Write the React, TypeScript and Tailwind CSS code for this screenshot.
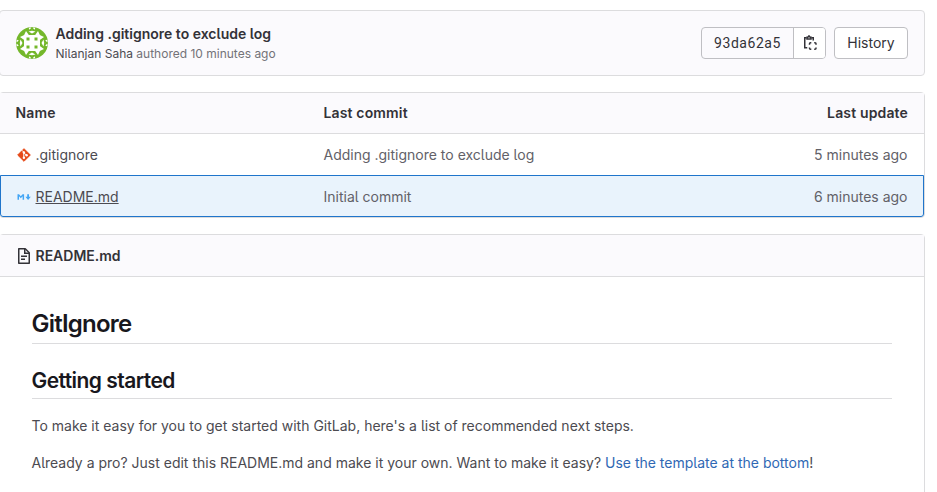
import React from "react";

const quarterTurns = [0, 90, 180, 270];

function Avatar() {
  return (
    <svg viewBox="0 0 32 32" className="size-8 shrink-0">
      <defs>
        <clipPath id="avatar-circle">
          <circle cx="16" cy="16" r="16" />
        </clipPath>
      </defs>
      <g clipPath="url(#avatar-circle)">
        <rect width="32" height="32" fill="#74b72b" />
        <path fill="#fff" d="M8 8h16v16H8z" />
        {quarterTurns.map((angle) => (
          <g key={angle} fill="#fff" transform={`rotate(${angle} 16 16)`}>
            <path d="M8 8.200L10 4l3 4.200zM24 8.200L22 4l-3 4.200z" />
            <path d="M12.500 4.500L16 3.800l3.500.700L16 6.500zM12.500.500h3L13.500 2.800zM19.500.500h-3l2 2.300z" />
            <path d="M10.500 10.500h3v3h-3z" fill="#74b72b" />
          </g>
        ))}
      </g>
    </svg>
  );
}

function CopyIcon() {
  return (
    <svg viewBox="0 0 16 16" className="size-4" fill="none" stroke="#333238" strokeWidth="1.500">
      <path d="M4.500 2.750H2.750v10h2.500M9.500 2.750h1.750V5.500" />
      <path d="M5 4V2.200h.8L7 .900l1.200 1.300H9V4z" />
      <path d="M9.300 7.750h-.8a1 1 0 0 0-1 1v.9M12.200 7.750h.8a1 1 0 0 1 1 1v.9M7.500 12.400v.9a1 1 0 0 0 1 1h.8M12.200 14.300h.8a1 1 0 0 0 1-1v-.9" />
    </svg>
  );
}

function GitIcon() {
  return (
    <svg viewBox="0 0 16 16" className="size-4 shrink-0">
      <path fill="#e64a19" d="M8 1.700 14.300 8 8 14.300 1.700 8z" stroke="#e64a19" strokeWidth="1" strokeLinejoin="round" />
      <path d="M5.800 3.200l2 2v5.500M8 5.800l2.300 2.300" stroke="#fff" strokeWidth="1" fill="none" />
      <circle cx="7.900" cy="5.500" r="1.200" fill="#fff" />
      <circle cx="7.900" cy="10.700" r="1.200" fill="#fff" />
      <circle cx="10.600" cy="8.200" r="1.200" fill="#fff" />
    </svg>
  );
}

function MarkdownIcon() {
  return (
    <svg viewBox="0 0 16 16" className="size-4 shrink-0">
      <path fill="#42a5f5" d="M1.500 10.700V5.200H3l1.800 2 1.800-2h1.500v5.500H6.600V7.300L4.800 9.300 3 7.300v3.400zM11.200 5.200h1.800v2.500h1.800L12.100 10.900 9.400 7.700h1.800z" />
    </svg>
  );
}

function DocumentIcon() {
  return (
    <svg viewBox="0 0 16 16" className="size-4 shrink-0" fill="none" stroke="#333238" strokeWidth="1.500">
      <path d="M2.750.750h6.500l4 4v10.500H2.750z" strokeLinejoin="round" />
      <path d="M8.750 1v4.250H13M5 8.250h6M5 11.250h4" />
    </svg>
  );
}

export default function App() {
  return (
    <div className="h-[492px] overflow-hidden bg-white pt-[10px] font-[Inter,sans-serif] text-[14px] leading-5 text-[#333238] [font-feature-settings:'cv05']">
      <div className="-ml-px w-[926px]">
        <section className="flex h-[66px] items-center rounded border border-[#dcdcde] bg-[#fbfafd] px-4">
          <Avatar />
          <div className="ml-[7.500px] flex-1 pt-0.5">
            <div className="font-semibold leading-5">Adding .gitignore to exclude log</div>
            <div className="text-[12px] leading-[20px] text-[#737278]">
              <span className="text-[#4c4b51]">Nilanjan Saha</span> authored 10 minutes ago
            </div>
          </div>
          <div className="flex h-8 w-[125px] overflow-hidden rounded border border-[#bfbfc3]">
            <span className="flex w-[92px] items-center justify-center border-r border-[#bfbfc3] font-[Roboto,sans-serif] tracking-[0.55px]">93da62a5</span>
            <button className="flex flex-1 items-center justify-center bg-white"><CopyIcon /></button>
          </div>
          <button className="ml-2 h-8 w-[74px] rounded border border-[#bfbfc3] bg-white">History</button>
        </section>

        <section className="mt-4 h-[126px] rounded border border-[#dcdcde]">
          <div className="flex h-[41px] items-center border-b border-[#dcdcde] bg-[#fbfafd] pl-[15.500px] pr-4 font-semibold tracking-[0.15px]">
            <span className="w-[308px]">Name</span>
            <span className="flex-1">Last commit</span>
            <span>Last update</span>
          </div>
          <div className="flex h-[41px] items-center pl-4 pr-[16.500px] text-[#626168]">
            <span className="flex w-[307.500px] items-center gap-[3.500px] text-[#4c4b51]"><GitIcon />.gitignore</span>
            <span className="flex-1">Adding .gitignore to exclude log</span>
            <span>5 minutes ago</span>
          </div>
          <div className="flex h-[42px] items-center rounded-b-[3px] border border-[#1f75cb] bg-[#e9f3fc] pl-[15px] pr-[15.500px] pt-px text-[#626168]">
            <span className="flex w-[307.500px] items-center gap-[3.500px] text-[#4c4b51]"><MarkdownIcon /><span className="underline">README.md</span></span>
            <span className="flex-1">Initial commit</span>
            <span>6 minutes ago</span>
          </div>
        </section>

        <section className="mt-4 h-[300px] rounded border border-[#dcdcde]">
          <div className="flex h-[42px] items-center gap-[3.500px] border-b border-[#dcdcde] bg-[#fbfafd] px-4 font-semibold">
            <DocumentIcon />README.md
          </div>
          <div className="px-8 pt-8 text-[#4c4b51]">
            <h1 className="-indent-[0.5px] h-[35px] border-b border-[#dcdcde] text-[24px] font-semibold leading-[30px] tracking-[-0.78px] text-[#18171d]">GitIgnore</h1>
            <h2 className="-indent-[0.5px] mt-6 h-[31px] border-b border-[#dcdcde] text-[21px] font-semibold leading-[26px] tracking-[-0.55px] text-[#18171d]">Getting started</h2>
            <p className="-indent-[0.5px] mt-4 leading-[21px]">To make it easy for you to get started with GitLab, here&apos;s a list of recommended next steps.</p>
            <p className="-indent-[0.5px] mt-4 leading-[21px]">Already a pro? Just edit this README.md and make it your own. Want to make it easy? <a className="text-[#2f68b4]">Use the template at the bottom</a>!</p>
          </div>
        </section>
      </div>
    </div>
  );
}
